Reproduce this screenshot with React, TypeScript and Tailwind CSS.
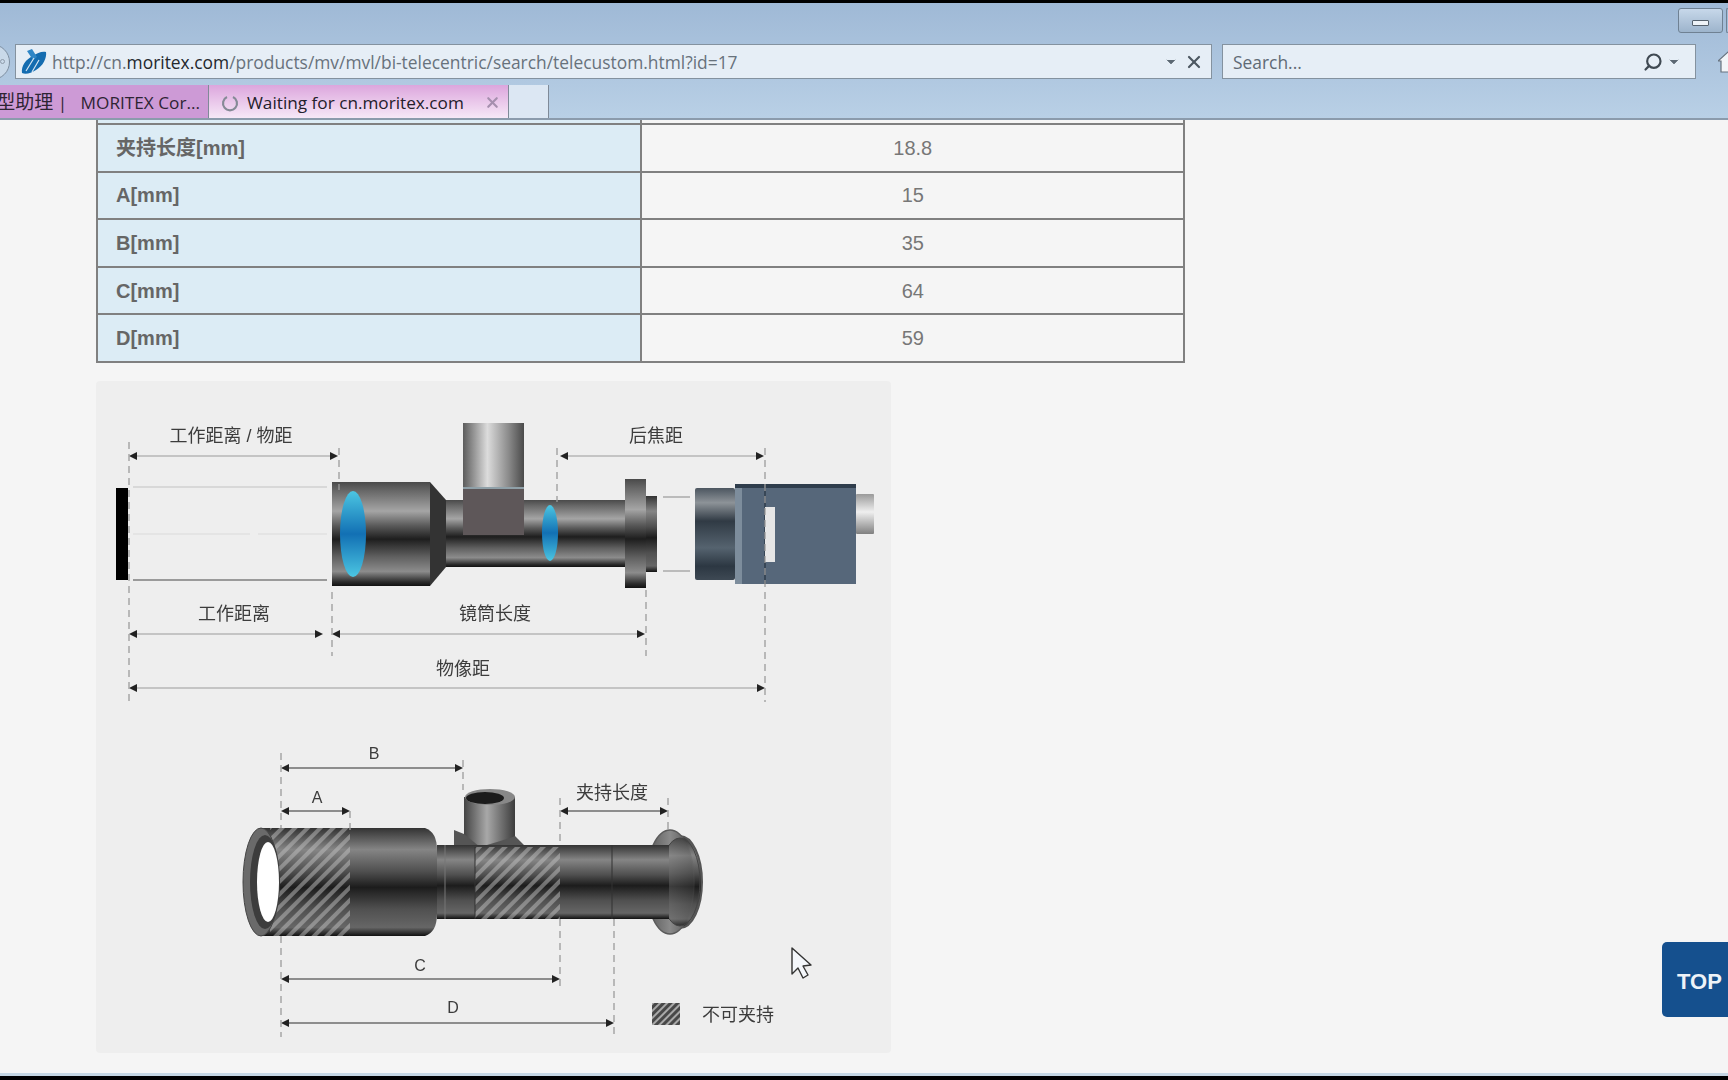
import { ChevronDown, Search, X } from 'lucide-react'

const rows = [
  { label: '夹持长度[mm]', value: '18.8' },
  { label: 'A[mm]', value: '15' },
  { label: 'B[mm]', value: '35' },
  { label: 'C[mm]', value: '64' },
  { label: 'D[mm]', value: '59' },
]

const cjk = '"Liberation Sans", "Noto Sans CJK SC", sans-serif'

function Dim({ x1, x2, y, dark }: { x1: number; x2: number; y: number; dark?: boolean }) {
  return (
    <g>
      <line x1={x1 + 6} x2={x2 - 6} y1={y} y2={y} stroke={dark ? '#8d8d8d' : '#c4c4c4'} strokeWidth="2" />
      <path d={`M${x1} ${y} l8 -4 v8 z`} fill="#222" />
      <path d={`M${x2} ${y} l-8 -4 v8 z`} fill="#222" />
    </g>
  )
}

function Dash({ x, y1, y2 }: { x: number; y1: number; y2: number }) {
  return <line x1={x} x2={x} y1={y1} y2={y2} stroke="#9c9c9c" strokeWidth="1.3" strokeDasharray="7 5" />
}

function Label({ x, y, size = 18, children }: { x: number; y: number; size?: number; children: string }) {
  return (
    <text x={x} y={y} textAnchor="middle" dominantBaseline="central" fontSize={size} fill="#3c3c3c" style={{ fontFamily: cjk }}>
      {children}
    </text>
  )
}

function Diagram() {
  return (
    <svg viewBox="96 381 795 672" className="block h-[672px] w-[795px] blur-[0.7px]">
      <defs>
        <linearGradient id="metal" x1="0" y1="0" x2="0" y2="1">
          <stop offset="0" stopColor="#4a4a4a" />
          <stop offset="0.08" stopColor="#666" />
          <stop offset="0.28" stopColor="#a5a5a5" />
          <stop offset="0.42" stopColor="#5a5a5a" />
          <stop offset="0.55" stopColor="#1e1e1e" />
          <stop offset="0.72" stopColor="#606060" />
          <stop offset="0.86" stopColor="#8c8c8c" />
          <stop offset="0.96" stopColor="#2c2c2c" />
          <stop offset="1" stopColor="#111" />
        </linearGradient>
        <linearGradient id="metalDark" x1="0" y1="0" x2="0" y2="1">
          <stop offset="0" stopColor="#333" />
          <stop offset="0.2" stopColor="#858585" />
          <stop offset="0.4" stopColor="#505050" />
          <stop offset="0.55" stopColor="#1c1c1c" />
          <stop offset="0.75" stopColor="#505050" />
          <stop offset="0.92" stopColor="#666" />
          <stop offset="1" stopColor="#111" />
        </linearGradient>
        <linearGradient id="rim" x1="0" y1="0" x2="1" y2="0">
          <stop offset="0" stopColor="#555" />
          <stop offset="0.5" stopColor="#8a8a8a" />
          <stop offset="1" stopColor="#4a4a4a" />
        </linearGradient>
        <linearGradient id="pipe" x1="0" y1="0" x2="1" y2="0">
          <stop offset="0" stopColor="#5c5c5c" />
          <stop offset="0.4" stopColor="#dcdcdc" />
          <stop offset="0.75" stopColor="#8a8a8a" />
          <stop offset="1" stopColor="#4a4a4a" />
        </linearGradient>
        <linearGradient id="pipeDark" x1="0" y1="0" x2="1" y2="0">
          <stop offset="0" stopColor="#444" />
          <stop offset="0.45" stopColor="#a8a8a8" />
          <stop offset="1" stopColor="#3c3c3c" />
        </linearGradient>
        <linearGradient id="lens" x1="0" y1="0" x2="0" y2="1">
          <stop offset="0" stopColor="#4cc6e2" />
          <stop offset="0.5" stopColor="#1270b4" />
          <stop offset="1" stopColor="#4cc6e2" />
        </linearGradient>
        <linearGradient id="camFront" x1="0" y1="0" x2="0" y2="1">
          <stop offset="0" stopColor="#4c5660" />
          <stop offset="0.16" stopColor="#8d9398" />
          <stop offset="0.36" stopColor="#303a44" />
          <stop offset="0.65" stopColor="#55636f" />
          <stop offset="0.85" stopColor="#2c3742" />
          <stop offset="1" stopColor="#3e4954" />
        </linearGradient>
        <linearGradient id="plug" x1="0" y1="0" x2="0" y2="1">
          <stop offset="0" stopColor="#9a9a9a" />
          <stop offset="0.45" stopColor="#efefef" />
          <stop offset="1" stopColor="#808080" />
        </linearGradient>
        <pattern id="hatch" width="9" height="9" patternUnits="userSpaceOnUse" patternTransform="rotate(45)">
          <rect width="4" height="9" fill="#c0c0c0" fillOpacity="0.5" />
        </pattern>
        <pattern id="hatchKey" width="5" height="5" patternUnits="userSpaceOnUse" patternTransform="rotate(45)">
          <rect width="2" height="5" fill="#a8a8a8" />
        </pattern>
      </defs>

      {/* upper drawing */}
      <Label x={231} y={436}>工作距离 / 物距</Label>
      <Label x={656} y={436}>后焦距</Label>
      <Label x={234} y={614}>工作距离</Label>
      <Label x={495} y={614}>镜筒长度</Label>
      <Label x={463} y={669}>物像距</Label>

      <rect x="116" y="488" width="12" height="92" fill="#000" />
      <line x1="133" x2="327" y1="487" y2="487" stroke="#d8d8d8" strokeWidth="2" />
      <line x1="133" x2="250" y1="534" y2="534" stroke="#e4e4e4" strokeWidth="2" />
      <line x1="258" x2="327" y1="534" y2="534" stroke="#e4e4e4" strokeWidth="2" />
      <line x1="133" x2="327" y1="580" y2="580" stroke="#9a9a9a" strokeWidth="2" />

      <rect x="463" y="423" width="61" height="66" fill="url(#pipe)" />
      <rect x="446" y="500" width="180" height="67" fill="url(#metal)" />
      <rect x="463" y="487" width="61" height="48" fill="#5e5759" />
      <line x1="463" x2="524" y1="488" y2="488" stroke="#8fa0a8" strokeWidth="2" />
      <rect x="332" y="482" width="98" height="104" fill="url(#metal)" />
      <path d="M430 482 L446 500 V567 L430 586 Z" fill="#333" />
      <ellipse cx="353" cy="534" rx="13" ry="43" fill="url(#lens)" />
      <ellipse cx="550" cy="533" rx="8" ry="28" fill="url(#lens)" />
      <rect x="625" y="479" width="21" height="109" fill="url(#metal)" />
      <rect x="646" y="496" width="11" height="76" fill="url(#metalDark)" />
      <line x1="663" x2="690" y1="497" y2="497" stroke="#aaa" strokeWidth="1.5" />
      <line x1="663" x2="690" y1="571" y2="571" stroke="#aaa" strokeWidth="1.5" />
      <rect x="695" y="488" width="40" height="92" rx="2" fill="url(#camFront)" />
      <rect x="735" y="484" width="121" height="100" fill="#56677a" />
      <rect x="735" y="484" width="121" height="4" fill="#2f3d4c" />
      <rect x="735" y="488" width="7" height="96" fill="#7d8d9c" />
      <line x1="765" x2="765" y1="488" y2="584" stroke="#2f3d4c" strokeWidth="1.5" />
      <rect x="765" y="507" width="10" height="55" fill="#e6e6e6" />
      <rect x="856" y="494" width="18" height="40" rx="1" fill="url(#plug)" />

      <Dim x1={129} x2={338} y={456} />
      <Dim x1={560} x2={764} y={456} />
      <Dim x1={129} x2={323} y={634} />
      <Dim x1={332} x2={645} y={634} />
      <Dim x1={129} x2={765} y={688} />
      <Dash x={129} y1={442} y2={702} />
      <Dash x={339} y1={448} y2={490} />
      <Dash x={332} y1={592} y2={656} />
      <Dash x={557} y1={448} y2={502} />
      <Dash x={646} y1={590} y2={656} />
      <Dash x={765} y1={448} y2={702} />

      {/* lower drawing */}
      <Label x={374} y={753} size={16}>B</Label>
      <Label x={317} y={797} size={16}>A</Label>
      <Label x={612} y={793}>夹持长度</Label>
      <Label x={420} y={965} size={16}>C</Label>
      <Label x={453} y={1007} size={16}>D</Label>
      <Label x={738} y={1015}>不可夹持</Label>

      <rect x="464" y="797" width="51" height="50" fill="url(#pipeDark)" />
      <ellipse cx="490" cy="797" rx="25" ry="8" fill="#888" />
      <ellipse cx="485" cy="798" rx="19" ry="6" fill="#1c1c1c" />
      <path d="M454 830 L464 834 L480 847 H454 Z" fill="#555" />
      <path d="M480 847 Q505 840 515 836 L525 846 Z" fill="#555" />

      <ellipse cx="680" cy="882" rx="22" ry="46" fill="url(#metalDark)" stroke="#555" strokeWidth="2" />
      <ellipse cx="670" cy="882" rx="24" ry="52" fill="url(#rim)" stroke="#5a5a5a" strokeWidth="1.5" />
      <ellipse cx="680" cy="882" rx="20" ry="44" fill="url(#metalDark)" fillOpacity="0.7" stroke="#444" />
      <rect x="437" y="845" width="232" height="74" fill="url(#metalDark)" />
      <path d="M260 828 H425 Q437 832 437 850 V914 Q437 932 425 936 H260 Z" fill="url(#metalDark)" />
      <rect x="270" y="828" width="80" height="108" fill="url(#hatch)" />
      <rect x="475" y="847" width="85" height="72" fill="url(#hatch)" />
      <line x1="612" x2="612" y1="845" y2="919" stroke="#333" />
      <line x1="475" x2="475" y1="847" y2="919" stroke="#333" />
      <line x1="445" x2="445" y1="845" y2="919" stroke="#777" />
      <ellipse cx="261" cy="882" rx="18" ry="54" fill="#6a6a6a" stroke="#444" />
      <ellipse cx="265" cy="882" rx="15" ry="47" fill="#3d3d3d" />
      <ellipse cx="268" cy="882" rx="11" ry="40" fill="#fff" />

      <Dim x1={281} x2={463} y={768} dark />
      <Dim x1={281} x2={350} y={811} dark />
      <Dim x1={560} x2={668} y={811} dark />
      <Dim x1={281} x2={560} y={979} dark />
      <Dim x1={281} x2={614} y={1023} dark />
      <Dash x={281} y1={753} y2={828} />
      <Dash x={281} y1={936} y2={1037} />
      <Dash x={350} y1={811} y2={830} />
      <Dash x={463} y1={760} y2={790} />
      <Dash x={560} y1={798} y2={845} />
      <Dash x={560} y1={919} y2={990} />
      <Dash x={614} y1={919} y2={1036} />
      <Dash x={668} y1={798} y2={830} />

      <rect x="652" y="1003" width="28" height="22" fill="#484848" />
      <rect x="652" y="1003" width="28" height="22" fill="url(#hatchKey)" />

      {/* mouse pointer */}
      <path d="M792 948 V974 L798 968 L803 978 L808 975 L803 966 L811 965 Z" fill="#f4f7fb" stroke="#333" strokeWidth="1.4" strokeLinejoin="round" />
    </svg>
  )
}

function BrowserChrome() {
  return (
    <header className="flex h-[117px] shrink-0 flex-col border-b-2 border-[#8b9bac] bg-gradient-to-b from-[#9fb9d6] to-[#b9d0e6]" style={{ fontFamily: '"Open Sans", "Noto Sans CJK SC", sans-serif' }}>
      <div className="flex h-[41px] justify-end pt-[5px]">
        <div className="flex h-[25px] w-[45px] items-end justify-center rounded-[3px] border border-[#6f8193] bg-gradient-to-b from-[#c7d8ea] to-[#9db4cc] pb-[6px]">
          <div className="h-[6px] w-[17px] rounded-[1px] border border-[#56626e] bg-[#eef3f8]" />
        </div>
        <div className="ml-[3px] h-[25px] w-[2px] rounded-l-[3px] border border-r-0 border-[#6f8193]" />
      </div>

      <div className="flex h-[35px] items-center">
        <div className="-ml-[26px] mr-[5px] flex h-[36px] w-[36px] shrink-0 items-center justify-end rounded-full border border-[#7e8fa1] bg-[#c9d9e9] pr-[4px]">
          <div className="h-[5px] w-[5px] rounded-full border border-[#8e9baa]" />
        </div>
        <div className="flex h-[35px] w-[1197px] shrink-0 items-center border border-[#84929f] bg-[#e6eef6] pl-[5px] pr-[7px] text-[17.4px] text-[#68727c]">
          <svg viewBox="0 0 26 26" className="h-[26px] w-[26px] shrink-0">
            <path d="M1 24 C0 17 5 10 12 7 C16 4 21 2 25 3 C26 9 22 17 15 21 C10 24 5 26 1 24 Z" fill="#146cb0" />
            <path d="M6 2 L11 0 L16 8 L12 11 Z" fill="#2f86c6" />
            <path d="M5 22 L13 9 M11 23 L18 11" stroke="#d6e6f3" strokeWidth="1.2" fill="none" />
          </svg>
          <span className="ml-[5px] flex-1 whitespace-nowrap pt-[1px]">
            http://cn.<span className="text-[#23282d]">moritex.com</span>/products/mv/mvl/bi-telecentric/search/telecustom.html?id=17
          </span>
          <ChevronDown className="h-4 w-4 fill-[#5c6873] text-[#5c6873]" strokeWidth={1} />
          <X className="ml-[5px] h-[20px] w-[20px] text-[#4d5862]" strokeWidth={2.6} />
        </div>
        <div className="ml-[10px] flex h-[35px] w-[474px] shrink-0 items-center border border-[#84929f] bg-[#e6eef6] pl-[10px] pr-[13px] text-[17.4px] text-[#5f6a75]">
          <span className="flex-1 pt-[1px]">Search...</span>
          <Search className="h-[20px] w-[20px] -scale-x-100 text-[#3f4952]" strokeWidth={2.6} />
          <ChevronDown className="ml-[3px] h-4 w-4 fill-[#5c6873] text-[#5c6873]" strokeWidth={1} />
        </div>
        <svg viewBox="0 0 20 22" className="ml-[22px] h-[22px] w-[20px] shrink-0">
          <path d="M10 1 L20 10 H17 V21 H3 V10 H0 Z" fill="#f2f5f8" stroke="#66727e" strokeWidth="1.2" />
        </svg>
      </div>

      <div className="mt-[6px] flex h-[33px] items-stretch text-[17.2px]">
        <div className="flex w-[209px] shrink-0 items-center justify-end overflow-hidden whitespace-nowrap border-r border-[#7f8a98] bg-[#cd9ad6] pr-[8px] pt-[2px] text-[#2d2433]">
          <span className="text-[19px]">型助理</span>&nbsp;|&nbsp;&nbsp; MORITEX Cor...
        </div>
        <div className="flex w-[300px] shrink-0 items-center border-r border-[#7f8a98] bg-gradient-to-b from-[#dca6dd] to-[#f6e8f7] pl-[12px] pr-[7px] pt-[2px] text-[#23202a]">
          <svg viewBox="0 0 18 18" className="h-[18px] w-[18px] shrink-0">
            <path d="M6 3 A7 7 0 1 0 12 3" fill="none" stroke="#858a96" strokeWidth="2.2" />
          </svg>
          <span className="ml-[8px] flex-1 whitespace-nowrap">Waiting for cn.moritex.com</span>
          <X className="h-[17px] w-[17px] text-[#a58fae]" strokeWidth={3} />
        </div>
        <div className="w-[40px] shrink-0 border-r border-[#7f8a98] bg-[#dce7f3]" />
      </div>
    </header>
  )
}

export default function App() {
  return (
    <div className="relative flex h-[1080px] w-[1728px] flex-col overflow-hidden bg-[#f5f5f5]">
      <div className="h-[3px] shrink-0 bg-black" />
      <BrowserChrome />

      <main className="flex-1 pl-[96px]" style={{ fontFamily: cjk }}>
        <table className="w-[1089px] table-fixed border-collapse text-[20px] text-[#777]">
          <tbody>
            <tr className="h-[4px]">
              <td className="border-x-2 border-b-2 border-[#808080] bg-[#dcecf5]" />
              <td className="border-x-2 border-b-2 border-[#808080]" />
            </tr>
            {rows.map((row) => (
              <tr key={row.label} className="h-[47.6px]">
                <td className="border-2 border-[#808080] bg-[#dcecf5] pl-[18px] font-bold text-[#666]">{row.label}</td>
                <td className="border-2 border-[#808080] pl-[1px] text-center">{row.value}</td>
              </tr>
            ))}
          </tbody>
        </table>
        <div className="mt-[18px] w-[795px] rounded-[4px] bg-[#eeeeee]">
          <Diagram />
        </div>
      </main>

      <div className="h-[3px] shrink-0 bg-[#c5d6e4]" />
      <div className="h-[4px] shrink-0 bg-black" />

      <a className="absolute left-[1662px] top-[942px] flex h-[75px] w-[66px] items-center rounded-l-[5px] bg-[#15508e] pl-[15px] pt-[3px] text-[22px] font-bold text-[#eef3f8]" style={{ fontFamily: cjk }}>
        TOP
      </a>
    </div>
  )
}
